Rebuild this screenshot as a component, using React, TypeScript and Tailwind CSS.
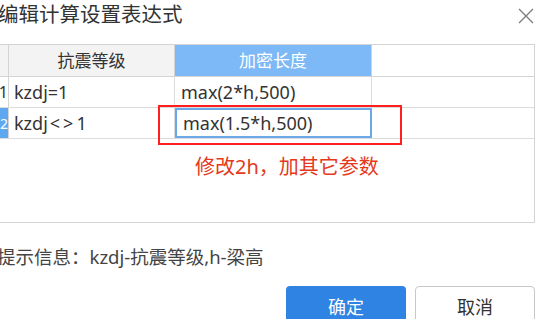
import React from "react";

const rows = [
  { no: "1", level: "kzdj=1", length: "max(2*h,500)", active: false },
  { no: "2", level: "kzdj<>1", length: "max(1.5*h,500)", active: true },
];

function CloseIcon() {
  return (
    <svg width="16" height="16" viewBox="0 0 16 16" className="text-[#7d7d7d]">
      <path d="M1 1L15 15M15 1L1 15" stroke="currentColor" strokeWidth="1.4" fill="none" />
    </svg>
  );
}

function LevelText({ text }: { text: string }) {
  if (!text.includes("<>")) return <>{text}</>;
  const [a, b] = text.split("<>");
  return (
    <>
      {a}
      <span className="ml-[2px] tracking-[3px]">{"<>"}</span>
      {b}
    </>
  );
}

export default function App() {
  return (
    <div
      className="relative w-[550px] h-[319px] overflow-hidden bg-white text-[#333]"
      style={{ fontFamily: '"Noto Sans", "Noto Sans CJK SC", sans-serif' }}
    >
      {/* Header */}
      <div className="flex items-start justify-between h-[44px] pr-[16px]">
        <h1 className="ml-[-2px] text-[20.5px] leading-[28px] text-[#333]">编辑计算设置表达式</h1>
        <div className="mt-[8px]">
          <CloseIcon />
        </div>
      </div>

      {/* Grid */}
      <div className="w-[535px] h-[179px] border border-l-0 border-[#d4d4d4]">
        <div className="flex h-[32px] border-b border-[#d4d4d4] text-[17px]">
          <div className="w-[9px] bg-[#f3f3f3] border-r border-[#d4d4d4]" />
          <div className="w-[166px] flex items-center justify-center bg-[#f3f3f3] border-r border-[#d4d4d4]">
            抗震等级
          </div>
          <div className="w-[197px] flex items-center justify-center bg-[#7db9f6] text-white border-r border-[#d4d4d4]">
            加密长度
          </div>
        </div>
        {rows.map((r) => (
          <div key={r.no} className="flex h-[31px] border-b border-[#dcdcdc] text-[18px]">
            <div
              className={
                r.active
                  ? "w-[9px] flex items-center justify-end bg-[#5ea8f0] text-white text-[14px] border-r border-[#d4d4d4]"
                  : "w-[9px] flex items-center justify-end text-[#333] text-[16px] border-r border-[#d4d4d4]"
              }
            >
              {r.no}
            </div>
            <div className="w-[166px] flex items-center pl-[5px] border-r border-[#dcdcdc]">
              <LevelText text={r.level} />
            </div>
            <div
              className={
                r.active
                  ? "w-[197px] flex items-center pl-[6px] border-2 border-[#6aa8ea]"
                  : "w-[197px] flex items-center pl-[6px] border-r border-[#dcdcdc]"
              }
            >
              {r.length}
            </div>
          </div>
        ))}
        <div className="mt-[14px] ml-[195px] text-[20px] leading-[28px] text-[#e4391b]">修改2h，加其它参数</div>
      </div>

      {/* Tip */}
      <p className="ml-[-3px] mt-[20px] text-[18.5px] leading-[27px] text-[#444]">提示信息：kzdj-抗震等级,h-梁高</p>

      {/* Buttons */}
      <div className="flex justify-end gap-[9px] pr-[15px] mt-[16px]">
        <button className="w-[120px] h-[42px] rounded-[4px] bg-[#2f83e2] text-white text-[18px]">确定</button>
        <button className="w-[120px] h-[42px] rounded-[4px] bg-white border border-[#c8c8c8] text-[#333] text-[18px]">
          取消
        </button>
      </div>

      {/* Annotation box */}
      <div className="absolute left-[158px] top-[105px] w-[244px] h-[40px] border-2 border-[#ff1f1f]" />
    </div>
  );
}
